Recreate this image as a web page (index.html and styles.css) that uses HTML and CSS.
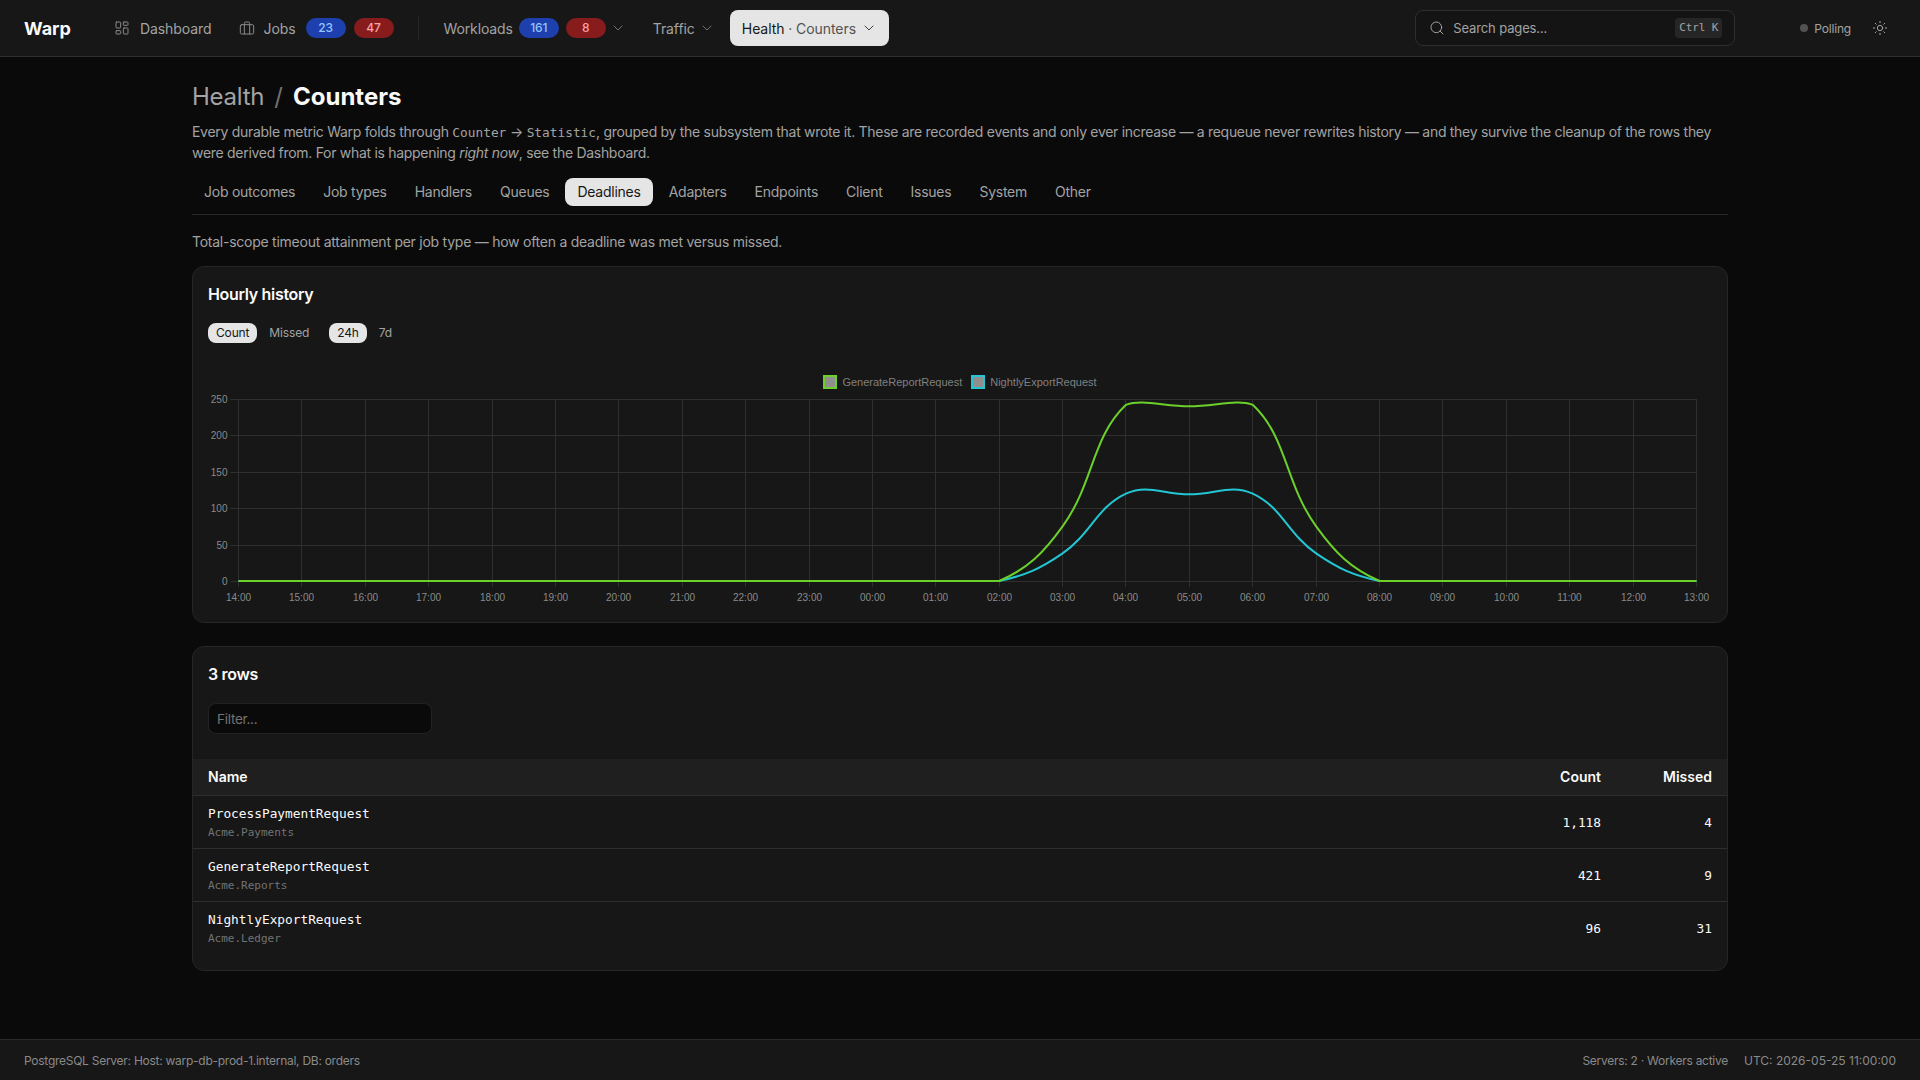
FILE: index.html
```html
<!DOCTYPE html>
<html lang="en">

<head>
  <meta charset="UTF-8">
  <title>Health · Counters | Warp</title>
  <link rel="stylesheet" href="styles.css">
</head>

<body>
  <header class="topbar">
    <a class="brand">Warp</a>
    <nav class="nav">
      <a class="nav-link">
        <svg class="icon" viewBox="0 0 24 24"><rect x="3" y="3" width="7" height="9" rx="1" /><rect x="14" y="3" width="7" height="5" rx="1" /><rect x="14" y="12" width="7" height="9" rx="1" /><rect x="3" y="16" width="7" height="5" rx="1" /></svg>
        Dashboard
      </a>
      <a class="nav-link nav-jobs">
        <svg class="icon" viewBox="0 0 24 24"><rect x="2" y="7" width="20" height="14" rx="2" /><path d="M16 21V5a2 2 0 0 0-2-2h-4a2 2 0 0 0-2 2v16" /></svg>
        Jobs
        <span class="badge badge-blue">23</span>
        <span class="badge badge-red">47</span>
      </a>
      <span class="nav-divider"></span>
      <a class="nav-link nav-workloads">
        Workloads
        <span class="badge badge-blue">161</span>
        <span class="badge badge-red">8</span>
        <svg class="chevron" viewBox="0 0 24 24"><path d="m6 9 6 6 6-6" /></svg>
      </a>
      <a class="nav-link nav-traffic">
        Traffic
        <svg class="chevron" viewBox="0 0 24 24"><path d="m6 9 6 6 6-6" /></svg>
      </a>
      <a class="nav-link nav-active">
        <span>Health <span class="nav-sub">· Counters</span></span>
        <svg class="chevron" viewBox="0 0 24 24"><path d="m6 9 6 6 6-6" /></svg>
      </a>
    </nav>
    <div class="search">
      <svg class="icon" viewBox="0 0 24 24"><circle cx="11" cy="11" r="8" /><path d="m21 21-4.3-4.3" /></svg>
      <span class="search-text">Search pages...</span>
      <kbd class="kbd">Ctrl K</kbd>
    </div>
    <div class="status"><span class="status-dot"></span>Polling</div>
    <svg class="icon theme-toggle" viewBox="0 0 24 24"><circle cx="12" cy="12" r="4" /><path d="M12 2v2M12 20v2M4.93 4.93l1.41 1.41M17.66 17.66l1.41 1.41M2 12h2M20 12h2M6.34 17.66l-1.41 1.41M19.07 4.93l-1.41 1.41" /></svg>
  </header>

  <main class="page">
    <h1 class="title"><span class="crumb">Health</span><span class="crumb-sep">/</span>Counters</h1>
    <p class="lede">Every durable metric Warp folds through <code>Counter</code> → <code>Statistic</code>, grouped by the subsystem that wrote it. These are recorded events and only ever increase — a requeue never rewrites history — and they survive the cleanup of the rows they were derived from. For what is happening <em>right now</em>, see the Dashboard.</p>

    <div class="tabs">
      <a class="tab">Job outcomes</a>
      <a class="tab">Job types</a>
      <a class="tab">Handlers</a>
      <a class="tab">Queues</a>
      <a class="tab tab-active">Deadlines</a>
      <a class="tab">Adapters</a>
      <a class="tab">Endpoints</a>
      <a class="tab">Client</a>
      <a class="tab">Issues</a>
      <a class="tab">System</a>
      <a class="tab">Other</a>
    </div>

    <p class="section-note">Total-scope timeout attainment per job type — how often a deadline was met versus missed.</p>

    <section class="card chart-card">
      <h2 class="card-title">Hourly history</h2>
      <div class="toggles">
        <div class="toggle-group">
          <a class="toggle toggle-active">Count</a>
          <a class="toggle">Missed</a>
        </div>
        <div class="toggle-group">
          <a class="toggle toggle-active">24h</a>
          <a class="toggle">7d</a>
        </div>
      </div>
      <div class="legend">
        <span class="legend-item"><i class="swatch swatch-green"></i>GenerateReportRequest</span>
        <span class="legend-item"><i class="swatch swatch-cyan"></i>NightlyExportRequest</span>
      </div>
      <svg class="chart" id="chart" viewBox="0 0 1504 215"></svg>
    </section>

    <section class="card table-card">
      <h2 class="card-title">3 rows</h2>
      <input class="filter" type="text" placeholder="Filter...">
      <table class="table">
        <thead>
          <tr>
            <th>Name</th>
            <th class="num">Count</th>
            <th class="num col-missed">Missed</th>
          </tr>
        </thead>
        <tbody>
          <tr>
            <td><div class="job-name">ProcessPaymentRequest</div><div class="job-ns">Acme.Payments</div></td>
            <td class="num">1,118</td>
            <td class="num">4</td>
          </tr>
          <tr>
            <td><div class="job-name">GenerateReportRequest</div><div class="job-ns">Acme.Reports</div></td>
            <td class="num">421</td>
            <td class="num">9</td>
          </tr>
          <tr>
            <td><div class="job-name">NightlyExportRequest</div><div class="job-ns">Acme.Ledger</div></td>
            <td class="num">96</td>
            <td class="num">31</td>
          </tr>
        </tbody>
      </table>
    </section>
  </main>

  <footer class="footer">
    <span>PostgreSQL Server: Host: warp-db-prod-1.internal, DB: orders</span>
    <span class="footer-right">
      <span>Servers: 2 · Workers active</span>
      <span class="footer-clock">UTC: 2026-05-25 11:00:00</span>
    </span>
  </footer>

  <script src="chart.js"></script>
</body>

</html>
```

FILE: styles.css
```css
:root {
  --bg: #0a0a0a;
  --panel: #171717;
  --line: #262626;
  --text: #fafafa;
  --muted: #a3a3a3;
  --faint: #737373;
  --active: #e5e5e5;
  --mono: "DejaVu Sans Mono", "Liberation Mono", monospace;
}

* {
  margin: 0;
  padding: 0;
  box-sizing: border-box;
}

body {
  font-family: Inter, "Liberation Sans", sans-serif;
  font-size: 14px;
  line-height: 21px;
  background: var(--bg);
  color: var(--text);
  display: flex;
  flex-direction: column;
  min-height: 100vh;
}

.icon,
.chevron {
  fill: none;
  stroke: currentColor;
  stroke-width: 1.5;
  stroke-linecap: round;
  stroke-linejoin: round;
  flex: none;
  width: 16px;
  height: 16px;
}

/* top bar */
.topbar {
  height: 57px;
  background: var(--panel);
  border-bottom: 1px solid #2e2e2e;
  display: flex;
  align-items: center;
  padding: 0 24px;
}

.brand {
  font-size: 18px;
  font-weight: 700;
  color: var(--text);
  margin-right: 43px;
}

.nav {
  display: flex;
  align-items: center;
  flex: 1;
}

.nav-link {
  display: flex;
  align-items: center;
  gap: 10px;
  color: var(--muted);
  margin-right: 28px;
  letter-spacing: -0.005em;
}

.nav-link .icon {
  color: #8a8a8a;
}

.nav-link .chevron {
  color: #737373;
}

.nav-jobs {
  gap: 8px;
}

.nav-jobs .badge:first-of-type {
  margin-left: 2px;
}

.nav-divider {
  width: 1px;
  height: 24px;
  background: var(--line);
  margin: 0 25px 0 -4px;
}

.nav-workloads {
  gap: 6px;
  margin-right: 27px;
  letter-spacing: -0.01em;
}

.nav-workloads .badge + .badge {
  margin-left: 1px;
}

.nav-workloads .chevron {
  margin-left: -2px;
}

.nav-traffic {
  gap: 4px;
  margin-right: 15px;
}

.nav-active {
  height: 36px;
  padding: 0 12px;
  border-radius: 8px;
  background: var(--active);
  color: #171717;
  margin-right: 0;
  gap: 5px;
}

.nav-active .chevron {
  color: #404040;
}

.nav-sub {
  color: #525252;
}

.badge {
  display: inline-block;
  min-width: 40px;
  height: 20px;
  border-radius: 10px;
  font-size: 12px;
  font-weight: 500;
  line-height: 20px;
  text-align: center;
}

.badge-blue {
  background: #1e40af;
  color: #93c5fd;
}

.badge-red {
  background: #881c1c;
  color: #fca5a5;
}

.search {
  width: 320px;
  height: 36px;
  border: 1px solid #2e2e2e;
  border-radius: 8px;
  background: #141414;
  display: flex;
  align-items: center;
  gap: 8px;
  padding: 0 12px 0 13px;
  color: var(--muted);
  font-size: 13px;
  letter-spacing: -0.01em;
}

.search-text {
  flex: 1;
}

.kbd {
  width: 47px;
  height: 20px;
  border-radius: 4px;
  background: #262626;
  font-family: var(--mono);
  font-size: 11px;
  line-height: 20px;
  text-align: center;
  color: var(--muted);
}

.status {
  display: flex;
  align-items: center;
  gap: 6px;
  margin-left: 65px;
  font-size: 12px;
  letter-spacing: -0.015em;
  color: var(--muted);
}

.status-dot {
  width: 8px;
  height: 8px;
  border-radius: 50%;
  background: #525252;
}

.theme-toggle {
  margin-left: 21px;
  margin-right: 8px;
  color: var(--muted);
}

/* page */
.page {
  width: 1536px;
  margin: 0 auto;
  flex: 1;
  padding-top: 22px;
}

.title {
  font-size: 24px;
  line-height: 36px;
  font-weight: 700;
  margin-bottom: 6px;
}

.crumb {
  font-weight: 400;
  color: var(--muted);
  letter-spacing: -0.01em;
}

.crumb-sep {
  font-weight: 400;
  color: var(--faint);
  margin: 0 10px;
}

.lede {
  color: var(--muted);
  letter-spacing: -0.021em;
}

.lede code {
  font-family: var(--mono);
  font-size: 12.8px;
  line-height: 1;
  letter-spacing: 0;
}

.tabs {
  display: flex;
  gap: 4px;
  margin-top: 15px;
  padding-bottom: 8px;
  border-bottom: 1px solid var(--line);
}

.tab {
  height: 28px;
  line-height: 28px;
  padding: 0 12px;
  border-radius: 8px;
  color: var(--muted);
  letter-spacing: -0.018em;
}

.tab-active {
  background: var(--active);
  color: #171717;
}

.section-note {
  color: var(--muted);
  margin-top: 16px;
  margin-bottom: 14px;
  letter-spacing: -0.018em;
}

.card {
  background: var(--panel);
  border: 1px solid var(--line);
  border-radius: 12px;
}

.card-title {
  font-size: 16px;
  line-height: 24px;
  font-weight: 600;
  letter-spacing: -0.02em;
  color: var(--text);
}

.chart-card {
  height: 357px;
  padding: 15px 15px 0;
}

.toggles {
  display: flex;
  gap: 12px;
  margin-top: 17px;
}

.toggle-group {
  display: flex;
  gap: 4px;
}

.toggle {
  height: 20px;
  line-height: 20px;
  padding: 0 8px;
  border-radius: 8px;
  font-size: 12px;
  letter-spacing: -0.012em;
  color: var(--muted);
}

.toggle-active {
  background: var(--active);
  color: #171717;
}

.legend {
  display: flex;
  justify-content: center;
  gap: 9px;
  margin-top: 31px;
  height: 16px;
  align-items: center;
  font-family: "Liberation Sans", Arial, sans-serif;
  font-size: 11px;
  color: #808080;
}

.legend-item {
  display: flex;
  align-items: center;
  gap: 5px;
}

.swatch {
  width: 14px;
  height: 14px;
  background: #8f8f8f;
  border: 2px solid;
}

.swatch-green {
  border-color: #6cd02a;
}

.swatch-cyan {
  border-color: #22c7d3;
}

.chart {
  display: block;
  width: 1504px;
  height: 215px;
  margin-top: 1px;
}

.chart .grid {
  stroke: #2f2f2f;
  stroke-width: 1;
}

.chart .axis-label {
  font-family: "Liberation Sans", Arial, sans-serif;
  font-size: 10px;
  fill: #8a8a8a;
}

.chart .series {
  fill: none;
  stroke-width: 2;
}

.table-card {
  margin-top: 23px;
  padding-top: 15px;
  height: 325px;
}

.table-card .card-title {
  padding-left: 15px;
}

.filter {
  display: block;
  width: 224px;
  height: 31px;
  margin: 17px 0 25px 15px;
  padding: 0 8px;
  background: var(--bg);
  border: 1px solid #222;
  border-radius: 8px;
  color: var(--text);
  font: 13.5px Inter, "Liberation Sans", sans-serif;
  letter-spacing: -0.02em;
}

.filter::placeholder {
  color: var(--faint);
}

.table {
  width: 100%;
  border-collapse: separate;
  border-spacing: 0;
}

.table th {
  height: 37px;
  background: #1f1f1f;
  border-bottom: 1px solid #2e2e2e;
  text-align: left;
  font-weight: 600;
  padding: 0 15px 1px;
}

.table td {
  height: 53px;
  padding: 0 15px;
  border-bottom: 1px solid #2e2e2e;
}

.table tbody tr:last-child td {
  border-bottom: 0;
}

.table .num {
  text-align: right;
  padding-left: 0;
  padding-right: 0;
}

.table .col-missed {
  width: 126px;
}

.table td.num {
  font-family: var(--mono);
  font-size: 12.8px;
}

.table td:last-child,
.table th:last-child {
  padding-right: 15px;
}

.job-name {
  font-family: var(--mono);
  font-size: 12.8px;
  line-height: 19px;
}

.job-ns {
  font-family: var(--mono);
  font-size: 11px;
  line-height: 16px;
  margin-top: 2px;
  color: var(--faint);
}

.footer {
  height: 41px;
  background: var(--panel);
  border-top: 1px solid #2a2a2a;
  display: flex;
  align-items: center;
  justify-content: space-between;
  padding: 0 24px;
  font-size: 12px;
  letter-spacing: -0.022em;
  color: #8a8a8a;
}

.footer-right {
  display: flex;
  gap: 16px;
}

.footer-clock {
  letter-spacing: 0;
}
```

FILE: chart.js
```js
// Hourly history, drawn the way the chart lib does it: bezier splines, tension 0.4,
// control points capped to the plot area
const hours = ['14:00', '15:00', '16:00', '17:00', '18:00', '19:00', '20:00', '21:00', '22:00', '23:00', '00:00', '01:00',
  '02:00', '03:00', '04:00', '05:00', '06:00', '07:00', '08:00', '09:00', '10:00', '11:00', '12:00', '13:00'];

const series = [
  { color: '#22c7d3', values: { 13: 38, 14: 120, 15: 119, 16: 120, 17: 38 } },
  { color: '#6cd02a', values: { 13: 75, 14: 242, 15: 240, 16: 242, 17: 75 } }
];

const svg = document.getElementById('chart');
const NS = 'http://www.w3.org/2000/svg';

// plot area inside the svg
const plotLeft = 30.5, plotRight = 1488.5, plotTop = 8, plotBottom = 190;
const stepX = (plotRight - plotLeft) / (hours.length - 1);
const xAt = i => plotLeft + i * stepX;
const yAt = v => plotBottom - (v / 250) * (plotBottom - plotTop);
const cap = y => Math.min(Math.max(y, plotTop), plotBottom);

function add(name, attrs, text) {
  const el = document.createElementNS(NS, name);
  for (const key in attrs) el.setAttribute(key, attrs[key]);
  if (text) el.textContent = text;
  svg.appendChild(el);
}

[0, 50, 100, 150, 200, 250].forEach(v => {
  const y = Math.round(yAt(v)) + 0.5;
  add('line', { class: 'grid', x1: plotLeft - 8, x2: plotRight, y1: y, y2: y });
  add('text', { class: 'axis-label', x: plotLeft - 11, y: y + 3, 'text-anchor': 'end' }, String(v));
});

hours.forEach((h, i) => {
  const x = Math.round(xAt(i) - 0.5) + 0.5;
  add('line', { class: 'grid', x1: x, x2: x, y1: plotTop, y2: plotBottom + 6 });
  add('text', { class: 'axis-label', x: x, y: plotBottom + 20, 'text-anchor': 'middle' }, h);
});

function splinePath(points) {
  const t = 0.4;
  const cps = points.map((p, i) => {
    const prev = points[i - 1] || p;
    const next = points[i + 1] || p;
    const d01 = Math.hypot(p.x - prev.x, p.y - prev.y);
    const d12 = Math.hypot(next.x - p.x, next.y - p.y);
    const sum = d01 + d12 || 1;
    return {
      inX: p.x - t * (d01 / sum) * (next.x - prev.x),
      inY: cap(p.y - t * (d01 / sum) * (next.y - prev.y)),
      outX: p.x + t * (d12 / sum) * (next.x - prev.x),
      outY: cap(p.y + t * (d12 / sum) * (next.y - prev.y))
    };
  });
  let d = `M${points[0].x},${points[0].y}`;
  for (let i = 1; i < points.length; i++) {
    d += ` C${cps[i - 1].outX},${cps[i - 1].outY} ${cps[i].inX},${cps[i].inY} ${points[i].x},${points[i].y}`;
  }
  return d;
}

series.forEach(s => {
  const points = hours.map((h, i) => ({ x: xAt(i), y: yAt(s.values[i] || 0) }));
  add('path', { class: 'series', stroke: s.color, d: splinePath(points) });
});
```
